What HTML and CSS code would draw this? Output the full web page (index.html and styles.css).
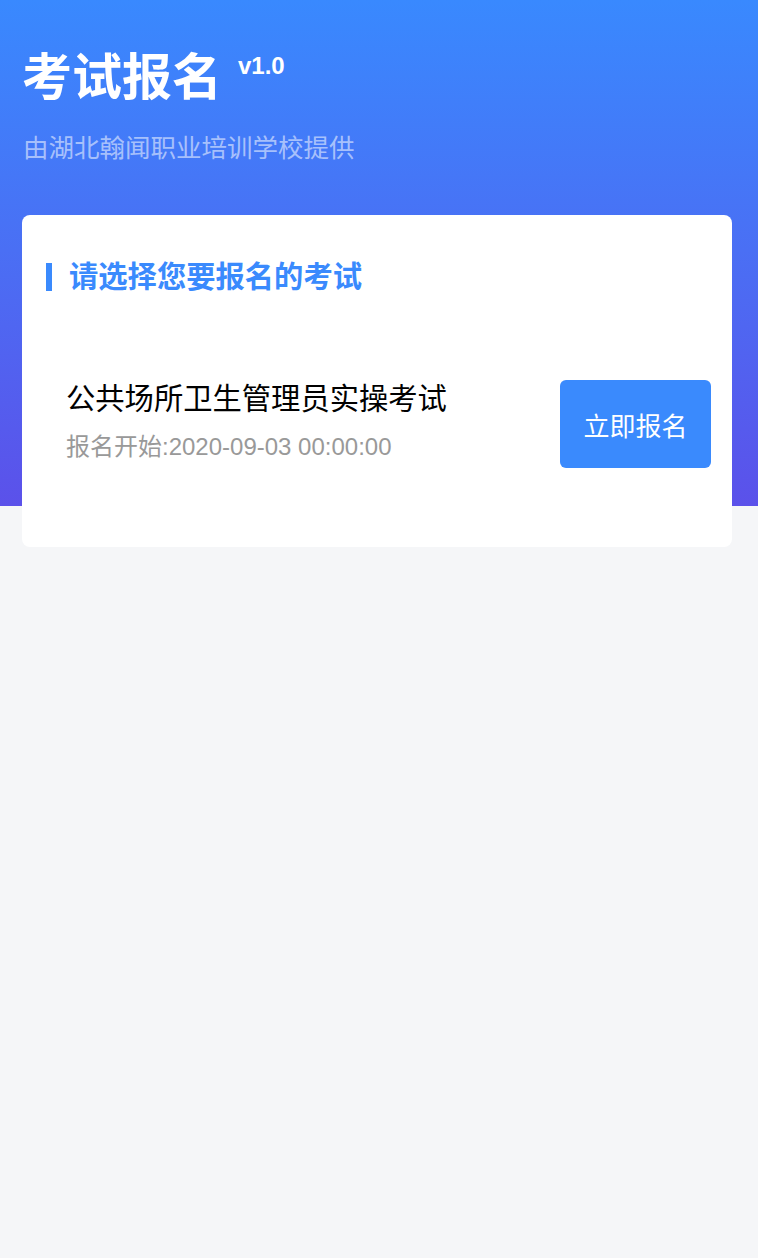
FILE: index.html
```html
<!DOCTYPE html>
<html lang="zh-CN">
<head>
<meta charset="utf-8">
<title>考试报名</title>
<link rel="stylesheet" href="styles.css">
</head>
<body>
<div class="page">
  <header class="hero">
    <div class="title-row">
      <h1 class="title">考试报名</h1>
      <span class="version">v1.0</span>
    </div>
    <p class="subtitle">由湖北翰闻职业培训学校提供</p>
  </header>
  <section class="card">
    <h2 class="card-heading">请选择您要报名的考试</h2>
    <div class="exam">
      <div class="exam-info">
        <div class="exam-name">公共场所卫生管理员实操考试</div>
        <div class="exam-date">报名开始:2020-09-03 00:00:00</div>
      </div>
      <button class="signup">立即报名</button>
    </div>
  </section>
</div>
</body>
</html>
```

FILE: styles.css
```css
* { box-sizing: border-box; }
html, body {
  margin: 0;
  padding: 0;
}
body {
  font-family: "Liberation Sans", "Noto Sans CJK SC", sans-serif;
  background: #f5f6f8;
}
.page {
  min-height: 1258px;
  background:
    linear-gradient(180deg, #3989fe 0px, #4a6ff4 250px, #5b51ea 506px, #f5f6f8 506px, #f5f6f8 100%);
  padding: 0 26px 0 22px;
}
.hero {
  padding: 44px 0 0 0;
  height: 215px;
}
.title-row {
  display: flex;
  align-items: flex-start;
}
.title {
  margin: 0;
  font-size: 50px;
  line-height: 68px;
  font-weight: 700;
  color: #fff;
}
.version {
  margin-left: 16px;
  margin-top: 7px;
  font-size: 24px;
  line-height: 30px;
  font-weight: 700;
  color: #fff;
}
.subtitle {
  margin: 18px 0 0 1px;
  font-size: 25.5px;
  line-height: 36px;
  color: rgba(255, 255, 255, 0.55);
}
.card {
  background: #fff;
  border-radius: 8px;
  height: 332px;
  padding: 42px 21px 0 24px;
}
.card-heading {
  margin: 0;
  display: flex;
  align-items: center;
  font-size: 29.3px;
  line-height: 40px;
  font-weight: 700;
  color: #3a8afd;
}
.card-heading::before {
  content: "";
  width: 6px;
  height: 28px;
  background: #3a8afd;
  margin-right: 17px;
}
.exam {
  margin-top: 83px;
  display: flex;
  align-items: center;
  justify-content: space-between;
  padding-left: 20px;
}
.exam-info {
  display: flex;
  flex-direction: column;
  gap: 12px;
  margin-top: -6px;
}
.exam-name {
  font-size: 29.3px;
  line-height: 40px;
  color: #000;
}
.exam-date {
  font-size: 24px;
  line-height: 32px;
  color: #999;
}
.signup {
  width: 151px;
  height: 88px;
  border: none;
  border-radius: 6px;
  background: #3a8afd;
  color: #fff;
  font-family: "Liberation Sans", "Noto Sans CJK SC", sans-serif;
  font-size: 26px;
  padding: 0;
}
```
